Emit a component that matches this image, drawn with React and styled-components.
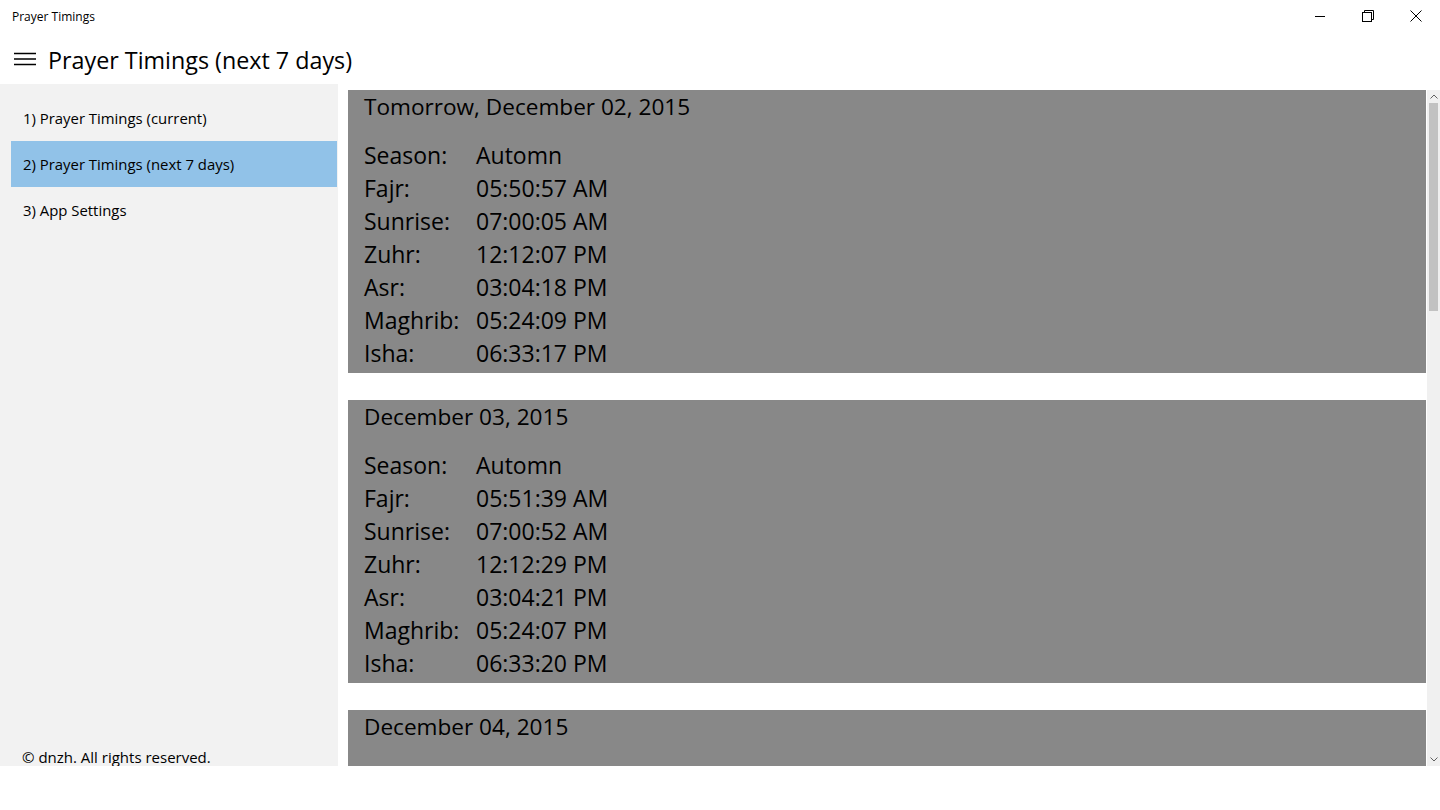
import React from "react";
import styled, { createGlobalStyle } from "styled-components";

const GlobalStyle = createGlobalStyle`
  html, body {
    margin: 0;
    padding: 0;
    background: #ffffff;
    font-family: "Open Sans", "Noto Sans", sans-serif;
    color: #000000;
  }
`;

const days = [
  {
    title: "Tomorrow, December 02, 2015",
    rows: [
      ["Season:", "Automn"],
      ["Fajr:", "05:50:57 AM"],
      ["Sunrise:", "07:00:05 AM"],
      ["Zuhr:", "12:12:07 PM"],
      ["Asr:", "03:04:18 PM"],
      ["Maghrib:", "05:24:09 PM"],
      ["Isha:", "06:33:17 PM"],
    ],
  },
  {
    title: "December 03, 2015",
    rows: [
      ["Season:", "Automn"],
      ["Fajr:", "05:51:39 AM"],
      ["Sunrise:", "07:00:52 AM"],
      ["Zuhr:", "12:12:29 PM"],
      ["Asr:", "03:04:21 PM"],
      ["Maghrib:", "05:24:07 PM"],
      ["Isha:", "06:33:20 PM"],
    ],
  },
  {
    title: "December 04, 2015",
    rows: [
      ["Season:", "Automn"],
      ["Fajr:", "05:52:20 AM"],
      ["Sunrise:", "07:01:38 AM"],
      ["Zuhr:", "12:12:52 PM"],
      ["Asr:", "03:04:25 PM"],
      ["Maghrib:", "05:24:07 PM"],
      ["Isha:", "06:33:24 PM"],
    ],
  },
];

const menu = [
  "1) Prayer Timings (current)",
  "2) Prayer Timings (next 7 days)",
  "3) App Settings",
];

const Window = styled.div`
  width: 1440px;
  height: 766px;
  display: flex;
  flex-direction: column;
  background: #ffffff;
  overflow: hidden;
`;

const TitleBar = styled.div`
  height: 32px;
  display: flex;
  align-items: center;
  justify-content: space-between;
  flex-shrink: 0;
`;

const AppName = styled.span`
  font-size: 12px;
  padding-left: 12px;
  padding-top: 1px;
`;

const Controls = styled.div`
  display: flex;
  height: 32px;
`;

const ControlBtn = styled.div`
  width: 48px;
  height: 32px;
  display: flex;
  align-items: center;
  justify-content: center;
`;

const Header = styled.div`
  height: 52px;
  display: flex;
  align-items: center;
  flex-shrink: 0;
`;

const Burger = styled.div`
  width: 48px;
  display: flex;
  justify-content: center;
  padding-left: 2px;
  padding-top: 2px;
  box-sizing: border-box;
`;

const PageTitle = styled.h1`
  margin: 0;
  font-size: 23.3px;
  font-weight: 400;
  padding-top: 4px;
`;

const Body = styled.div`
  flex: 1;
  display: flex;
  min-height: 0;
`;

const Sidebar = styled.nav`
  width: 338px;
  background: #f2f2f2;
  display: flex;
  flex-direction: column;
  padding-top: 11px;
  box-sizing: border-box;
  flex-shrink: 0;
`;

const MenuItem = styled.div`
  height: 46px;
  margin: 0 1px 0 11px;
  padding-left: 12px;
  display: flex;
  align-items: center;
  font-size: 14.9px;
  background: ${(p) => (p.$active ? "#91c2e8" : "transparent")};
`;

const Footer = styled.div`
  margin-top: auto;
  padding: 0 0 0 22px;
  height: 18px;
  font-size: 15px;
  line-height: 18px;
`;

const Content = styled.main`
  flex: 1;
  display: flex;
  padding: 6px 0 0 10px;
  min-width: 0;
`;

const CardList = styled.div`
  flex: 1;
  display: flex;
  flex-direction: column;
  gap: 27px;
  overflow: hidden;
`;

const Card = styled.section`
  background: #888888;
  padding: 1px 16px 3px;
  flex-shrink: 0;
`;

const CardTitle = styled.div`
  font-size: 22.6px;
  line-height: 32px;
  margin-bottom: 16px;
`;

const Row = styled.div`
  display: flex;
  font-size: 23px;
  line-height: 33px;
`;

const Label = styled.span`
  width: 112px;
  flex-shrink: 0;
`;

const Scrollbar = styled.div`
  width: 13px;
  margin-left: 1px;
  background: #f0f0f0;
  display: flex;
  flex-direction: column;
  align-items: center;
`;

const Arrow = styled.div`
  height: 13px;
  display: flex;
  align-items: center;
  justify-content: center;
  flex-shrink: 0;
`;

const Track = styled.div`
  flex: 1;
  width: 100%;
  display: flex;
  justify-content: center;
`;

const Thumb = styled.div`
  width: 9px;
  height: 208px;
  background: #c2c2c2;
`;

const App = () => {
  return (
    <>
      <GlobalStyle />
      <Window>
        <TitleBar>
          <AppName>Prayer Timings</AppName>
          <Controls>
            <ControlBtn>
              <svg width="12" height="12" viewBox="0 0 12 12">
                <path d="M1 6.5h10" stroke="#000" strokeWidth="1" />
              </svg>
            </ControlBtn>
            <ControlBtn>
              <svg width="12" height="12" viewBox="0 0 12 12" fill="none">
                <rect x="0.5" y="2.5" width="9" height="9" stroke="#000" />
                <path d="M2.5 2.5V0.5h9v9h-2" stroke="#000" />
              </svg>
            </ControlBtn>
            <ControlBtn>
              <svg width="12" height="12" viewBox="0 0 12 12">
                <path d="M0.5 0.5l11 11M11.5 0.5l-11 11" stroke="#000" />
              </svg>
            </ControlBtn>
          </Controls>
        </TitleBar>
        <Header>
          <Burger>
            <svg width="22" height="14" viewBox="0 0 22 14">
              <path
                d="M0 1.5h22M0 7h22M0 12.5h22"
                stroke="#000"
                strokeWidth="1.4"
              />
            </svg>
          </Burger>
          <PageTitle>Prayer Timings (next 7 days)</PageTitle>
        </Header>
        <Body>
          <Sidebar>
            {menu.map((m, i) => (
              <MenuItem key={m} $active={i === 1}>
                {m}
              </MenuItem>
            ))}
            <Footer>© dnzh. All rights reserved.</Footer>
          </Sidebar>
          <Content>
            <CardList>
              {days.map((d) => (
                <Card key={d.title}>
                  <CardTitle>{d.title}</CardTitle>
                  {d.rows.map(([k, v]) => (
                    <Row key={k}>
                      <Label>{k}</Label>
                      <span>{v}</span>
                    </Row>
                  ))}
                </Card>
              ))}
            </CardList>
            <Scrollbar>
              <Arrow>
                <svg width="8" height="5" viewBox="0 0 8 5" fill="none">
                  <path d="M0.5 4.5L4 1l3.5 3.5" stroke="#606060" />
                </svg>
              </Arrow>
              <Track>
                <Thumb />
              </Track>
              <Arrow>
                <svg width="8" height="5" viewBox="0 0 8 5" fill="none">
                  <path d="M0.5 0.5L4 4l3.5-3.5" stroke="#606060" />
                </svg>
              </Arrow>
            </Scrollbar>
          </Content>
        </Body>
      </Window>
    </>
  );
};

export default App;
